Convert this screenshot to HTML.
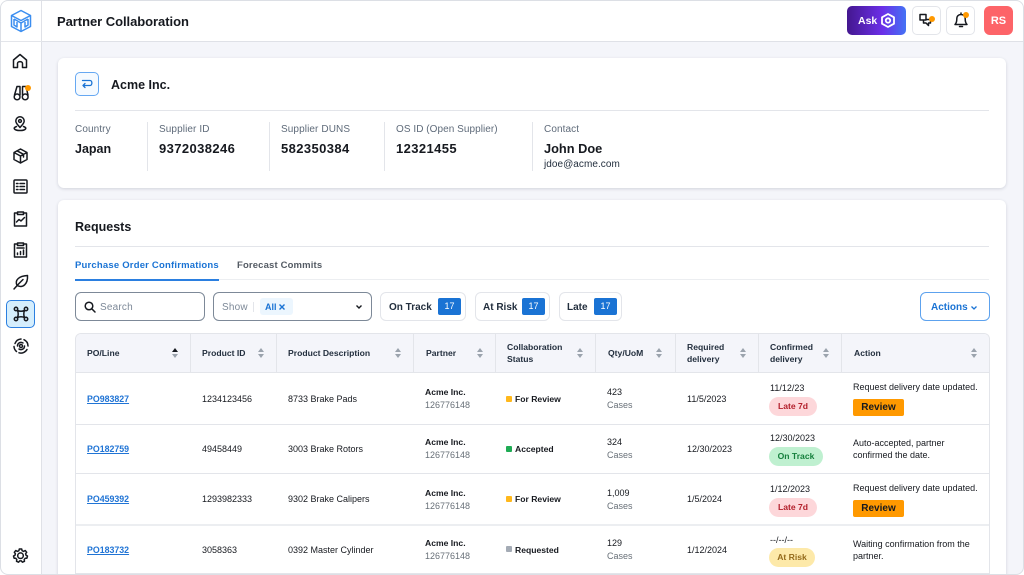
<!DOCTYPE html>
<html><head><meta charset="utf-8"><style>
*{box-sizing:border-box}
html,body{margin:0;padding:0;width:1024px;height:575px;overflow:hidden;background:#fff}
body{font-family:"Liberation Sans",sans-serif;color:#16191f;position:relative}
.a{position:absolute}
.t{position:absolute;white-space:nowrap;line-height:14px;height:14px}
.b{font-weight:700}
.s{font-size:9px}
.s.b{font-size:8.6px}
.h{font-size:8.6px;font-weight:700;color:#232f3e}
.g{color:#687078}
.l{background:#e3e5ea;position:absolute}
.c{position:absolute;background:#fff;border-radius:6px;box-shadow:0 1px 3px rgba(30,40,60,.16)}
.pill{position:absolute;height:19px;border-radius:10px;font-size:8.6px;font-weight:700;line-height:19px;text-align:center}
.rev{position:absolute;left:853px;width:51px;height:17px;background:#ff9900;border-radius:2px;font-size:10px;font-weight:700;line-height:17px;text-align:center;color:#16191f}
.po{color:#2074d5;font-weight:700;text-decoration:underline;font-size:8.8px}
.dot{position:absolute;width:6px;height:6px;border-radius:1px}
.chip{position:absolute;top:292px;height:29px;background:#fff;border:1px solid #e3e5ea;border-radius:6px}
.n{position:absolute;top:298px;width:23px;height:17px;background:#1a73d4;border-radius:2px;color:#fff;font-size:9px;line-height:17px;text-align:center}
.lab{font-size:10px;letter-spacing:.1px;color:#5f6b7a}
.val{font-size:13px;font-weight:700;letter-spacing:.4px}
.nm{font-size:10px;font-weight:700;color:#232f3e}
svg{position:absolute;overflow:visible}
.i{fill:none;stroke:#16191f;stroke-width:1.500;stroke-linecap:round;stroke-linejoin:round}
.sort{position:absolute;width:7px;height:10px;top:348px}
.sort:before{content:"";position:absolute;left:0;top:0;border-left:3.500px solid transparent;border-right:3.500px solid transparent;border-bottom:4px solid #9ba3ad}
.sort:after{content:"";position:absolute;left:0;top:6px;border-left:3.500px solid transparent;border-right:3.500px solid transparent;border-top:4px solid #9ba3ad}
.sort.on:before{border-bottom-color:#16191f}
.frame{position:absolute;left:0;top:0;width:1024px;height:575px;border:1px solid #dcdfe5;border-radius:8px;box-shadow:0 0 0 12px #fff}
</style></head><body>
<div class="a" style="left:0;top:0;width:1024px;height:575px;background:#f4f5fa"></div>
<div class="a" style="left:0;top:0;width:1024px;height:42px;background:#fff;border-bottom:1px solid #dfe1e7"></div>
<div class="a" style="left:0;top:0;width:42px;height:575px;background:#fff;border-right:1px solid #dfe1e7"></div>
<div class="l" style="left:0;top:41px;width:42px;height:1px"></div>

<svg style="left:9px;top:9px" width="24" height="24" viewBox="0 0 24 24" fill="none" stroke="#3b8ef0" stroke-width="1.500" stroke-linejoin="round"><path d="M12 1.500 21.500 6.500V17.500L12 22.500 2.500 17.500V6.500Z"/><path d="M2.500 6.500 12 11.500 21.500 6.500"/><path d="M5 10 12 14 19 10M5 10V16L8 18V13M19 10V16L16 18V13M12 14V22"/></svg>
<svg class="i" style="left:12px;top:53px" width="16" height="16" viewBox="0 0 16 16"><path d="M1.500 7 8 1.500 14.500 7V14.500H10.500V10.500C10.500 8 5.500 8 5.500 10.500V14.500H1.500Z"/></svg>
<svg class="i" style="left:13px;top:85px" width="16" height="16" viewBox="0 0 16 16"><path d="M4 1.500 1.500 10M7 2V10M9.500 2V10M13 1.500 15 10M4 1.500H7M9.500 1.500H12.500"/><rect x="1.200" y="9" width="5.800" height="5.800" rx="2.900"/><rect x="9.300" y="9" width="5.800" height="5.800" rx="2.900"/></svg>
<div class="a" style="left:25px;top:85px;width:6px;height:6px;border-radius:50%;background:#ff9900"></div>
<svg class="i" style="left:12px;top:116px" width="16" height="16" viewBox="0 0 16 16"><path d="M8 11.500C5.500 8.500 3.800 7.300 3.800 5A4.200 4.200 0 0 1 12.200 5C12.200 7.300 10.500 8.500 8 11.500Z"/><circle cx="8" cy="5" r="1.400"/><path d="M4.500 10.500C2.500 11.200 1.800 12 2.500 13 4 15 12 15 13.500 13 14.200 12 13.500 11.200 11.500 10.500"/></svg>
<svg class="i" style="left:13px;top:148px" width="15" height="16" viewBox="0 0 15 16"><path d="M7.500 1 14 4.500V11.500L7.500 15 1 11.500V4.500ZM1 4.500 7.500 8 14 4.500M7.500 8V15M4 2.800 10.500 6.300V9"/></svg>
<svg class="i" style="left:13px;top:179px" width="15" height="15" viewBox="0 0 15 15"><rect x="1" y="1" width="13" height="13" rx="1"/><path d="M3.500 4.500H5M7 4.500H11.500M3.500 7.500H5M7 7.500H11.500M3.500 10.500H5M7 10.500H11.500"/></svg>
<svg class="i" style="left:13px;top:211px" width="15" height="16" viewBox="0 0 15 16"><path d="M4.500 2H1.500V15H13.500V2H10.500"/><rect x="4.500" y="1" width="6" height="2.500"/><path d="M3.500 11 6 8.500 8 10 11.500 6.500"/></svg>
<svg class="i" style="left:13px;top:242px" width="15" height="16" viewBox="0 0 15 16"><path d="M4.500 2H1.500V15H13.500V2H10.500"/><rect x="4.500" y="1" width="6" height="2.500"/><path d="M4 6H11M4.500 12.500V11M7.500 12.500V9.500M10.500 12.500V8"/></svg>
<svg class="i" style="left:13px;top:274px" width="16" height="16" viewBox="0 0 16 16"><path d="M1 15 6 9.500M4 11.500C1.500 6 6 2 14.500 1.500 15 10 10 14.500 4 11.500ZM6 9.500 10 5.500"/></svg>
<div class="a" style="left:6px;top:300px;width:29px;height:28px;background:#d5eefd;border:1.500px solid #2b7fe0;border-radius:5px"></div>
<svg class="i" style="left:13px;top:306px" width="16" height="16" viewBox="0 0 16 16"><path d="M4.500 4.500C7 5.500 9 5.500 11.500 4.500 10.500 7 10.500 9 11.500 11.500 9 10.500 7 10.500 4.500 11.500 5.500 9 5.500 7 4.500 4.500Z"/><circle cx="3" cy="3" r="1.700"/><circle cx="13" cy="3" r="1.700"/><circle cx="3" cy="13" r="1.700"/><circle cx="13" cy="13" r="1.700"/></svg>
<svg class="i" style="left:13px;top:338px" width="16" height="16" viewBox="0 0 16 16"><path d="M2 5.500A7 7 0 0 1 8 1M11 1.700A7 7 0 0 1 15 8M14 11.500A7 7 0 0 1 6 14.800M3.500 13.500A7 7 0 0 1 1 8.500"/><path d="M4.500 8A3.500 3.500 0 0 1 10 5M11.500 8A3.500 3.500 0 0 1 6 11"/><circle cx="8" cy="8" r="1.500"/></svg>
<svg class="i" style="left:13px;top:548px" width="15" height="15" viewBox="0 0 15 15"><path d="M6.300 1H8.700L9.100 2.700 10.700 3.400 12.200 2.500 13.700 4.300 12.600 5.700 13 7.200 14.500 8 13.900 10.200 12.200 10.300 11.200 11.600 11.500 13.300 9.400 14.200 8.300 12.900H6.700L5.600 14.200 3.500 13.300 3.800 11.600 2.800 10.300 1.100 10.200 .5 8 2 7.200 2.400 5.700 1.300 4.300 2.800 2.500 4.300 3.400 5.900 2.700Z"/><circle cx="7.500" cy="7.700" r="2.800"/></svg>

<div class="t b" style="left:57px;top:14px;font-size:13px;line-height:15px;height:15px;letter-spacing:-.05px">Partner Collaboration</div>
<div class="a" style="left:847px;top:6px;width:59px;height:29px;border-radius:5px;background:linear-gradient(90deg,#44178f,#6b2fe8 60%,#4472f5)"></div>
<div class="t b" style="left:858px;top:14px;font-size:10.500px;color:#fff">Ask</div>
<svg style="left:881px;top:13px" width="14" height="15" viewBox="0 0 14 15" fill="none" stroke="#fff" stroke-width="1.800" stroke-linejoin="round"><path d="M7 1 13 4.300V10.700L7 14 1 10.700V4.300Z"/><circle cx="7" cy="7.500" r="2.200"/></svg>
<div class="a" style="left:912px;top:6px;width:29px;height:29px;border-radius:5px;background:#fff;border:1px solid #e3e5ea"></div>
<svg class="i" style="left:919px;top:13px" width="15" height="15" viewBox="0 0 15 15"><path d="M1 1.500H7V7H1ZM4.500 7V10H7L9.500 12.500V10H11.500V6.500H7"/></svg>
<div class="a" style="left:929px;top:16px;width:6px;height:6px;border-radius:50%;background:#ff9900"></div>
<div class="a" style="left:946px;top:6px;width:29px;height:29px;border-radius:5px;background:#fff;border:1px solid #e3e5ea"></div>
<svg class="i" style="left:954px;top:12px" width="14" height="16" viewBox="0 0 14 16"><path d="M1 12.500C2.500 11 2.800 9.500 2.800 7 2.800 4 4.500 2.500 7 2.500 9.500 2.500 11.200 4 11.200 7 11.200 9.500 11.500 11 13 12.500ZM7 1V2.500M5.500 14.500H8.500"/></svg>
<div class="a" style="left:963px;top:12px;width:6px;height:6px;border-radius:50%;background:#ff9900"></div>
<div class="a" style="left:984px;top:6px;width:29px;height:29px;border-radius:6px;background:#fd6468"></div>
<div class="t b" style="left:984px;top:14px;width:29px;text-align:center;font-size:11px;color:#fff">RS</div>

<div class="c" style="left:58px;top:58px;width:948px;height:130px"></div>
<div class="a" style="left:75px;top:72px;width:24px;height:24px;border:1px solid #66a8f2;border-radius:5px;background:#f5faff"></div>
<svg style="left:81px;top:79px" width="12" height="10" viewBox="0 0 12 10" fill="none" stroke="#1a73d4" stroke-width="1.300" stroke-linecap="round" stroke-linejoin="round"><path d="M1.500 1.500H9C11.500 1.500 11.500 6.500 9 6.500H2M4 4.500 2 6.500 4 8.500"/></svg>
<div class="t b" style="left:111px;top:78px;font-size:12.500px">Acme Inc.</div>
<div class="l" style="left:75px;top:110px;width:914px;height:1px"></div>
<div class="l" style="left:147px;top:122px;width:1px;height:49px"></div>
<div class="l" style="left:269px;top:122px;width:1px;height:49px"></div>
<div class="l" style="left:384px;top:122px;width:1px;height:49px"></div>
<div class="l" style="left:532px;top:122px;width:1px;height:49px"></div>
<div class="t lab" style="left:75px;top:123px">Country</div>
<div class="t val" style="left:75px;top:142px;letter-spacing:0;font-size:12.500px">Japan</div>
<div class="t lab" style="left:159px;top:123px">Supplier ID</div>
<div class="t val" style="left:159px;top:142px">9372038246</div>
<div class="t lab" style="left:281px;top:123px">Supplier DUNS</div>
<div class="t val" style="left:281px;top:142px">582350384</div>
<div class="t lab" style="left:396px;top:123px;letter-spacing:.05px">OS ID (Open Supplier)</div>
<div class="t val" style="left:396px;top:142px">12321455</div>
<div class="t lab" style="left:544px;top:123px">Contact</div>
<div class="t val" style="left:544px;top:142px;letter-spacing:0;font-size:12.800px">John Doe</div>
<div class="t" style="left:544px;top:158px;font-size:10px;letter-spacing:.05px;color:#232f3e">jdoe@acme.com</div>

<div class="c" style="left:58px;top:200px;width:948px;height:385px"></div>
<div class="t b" style="left:75px;top:220px;font-size:12.500px">Requests</div>
<div class="l" style="left:75px;top:246px;width:914px;height:1px"></div>
<div class="t b" style="left:75px;top:259px;font-size:9.500px;letter-spacing:.2px;color:#1a73d4">Purchase Order Confirmations</div>
<div class="t b" style="left:237px;top:259px;font-size:9.500px;letter-spacing:.15px;color:#545b64">Forecast Commits</div>
<div class="l" style="left:75px;top:279px;width:914px;height:1px;background:#eceef1"></div>
<div class="a" style="left:75px;top:279px;width:144px;height:2px;background:#2b7fe0"></div>

<div class="a" style="left:75px;top:292px;width:130px;height:29px;border:1px solid #7d8998;border-radius:6px;background:#fff"></div>
<svg style="left:84px;top:301px" width="12" height="12" viewBox="0 0 12 12" fill="none" stroke="#16191f" stroke-width="1.500" stroke-linecap="round"><circle cx="5" cy="5" r="3.800"/><path d="M8 8 11 11"/></svg>
<div class="t" style="left:100px;top:301px;font-size:10px;letter-spacing:.2px;color:#7d8998">Search</div>
<div class="a" style="left:213px;top:292px;width:159px;height:29px;border:1px solid #7d8998;border-radius:6px;background:#fff"></div>
<div class="t" style="left:222px;top:301px;font-size:10px;letter-spacing:.2px;color:#7d8998">Show</div>
<div class="l" style="left:253px;top:302px;width:1px;height:10px"></div>
<div class="a" style="left:260px;top:298px;width:33px;height:17px;border-radius:3px;background:#ecf6fe"></div>
<div class="t b" style="left:265px;top:300px;font-size:9px;color:#1a73d4">All</div>
<svg style="left:279px;top:304px" width="6" height="6" viewBox="0 0 6 6" stroke="#1a73d4" stroke-width="1.400"><path d="M.5 .5 5.500 5.500M5.500 .5 .5 5.500"/></svg>
<svg style="left:356px;top:305px" width="6" height="4" viewBox="0 0 6 4" fill="none" stroke="#16191f" stroke-width="1.400"><path d="M.5 .5 3 3 5.500 .5"/></svg>

<div class="chip" style="left:380px;width:86px"></div>
<div class="t nm" style="left:389px;top:301px">On Track</div>
<div class="n" style="left:438px">17</div>
<div class="chip" style="left:475px;width:75px"></div>
<div class="t nm" style="left:483px;top:301px">At Risk</div>
<div class="n" style="left:522px">17</div>
<div class="chip" style="left:559px;width:63px"></div>
<div class="t nm" style="left:567px;top:301px">Late</div>
<div class="n" style="left:594px">17</div>
<div class="a" style="left:920px;top:292px;width:70px;height:29px;border:1px solid #5da2ee;border-radius:6px;background:#fff"></div>
<div class="t b" style="left:931px;top:301px;font-size:10px;color:#1a73d4">Actions</div>
<svg style="left:971px;top:306px" width="6" height="4" viewBox="0 0 6 4" fill="none" stroke="#1a73d4" stroke-width="1.300"><path d="M.5 .5 3 3 5.500 .5"/></svg>

<div class="a" style="left:75px;top:333px;width:915px;height:242px;border:1px solid #e3e5ea;border-bottom:0;border-radius:6px 6px 0 0;background:#fff"></div>
<div class="a" style="left:76px;top:334px;width:913px;height:39px;background:#f4f5fa;border-radius:5px 5px 0 0"></div>
<div class="l" style="left:76px;top:372px;width:913px;height:1px"></div>
<div class="l" style="left:190px;top:334px;width:1px;height:39px"></div>
<div class="l" style="left:276px;top:334px;width:1px;height:39px"></div>
<div class="l" style="left:413px;top:334px;width:1px;height:39px"></div>
<div class="l" style="left:495px;top:334px;width:1px;height:39px"></div>
<div class="l" style="left:595px;top:334px;width:1px;height:39px"></div>
<div class="l" style="left:675px;top:334px;width:1px;height:39px"></div>
<div class="l" style="left:758px;top:334px;width:1px;height:39px"></div>
<div class="l" style="left:841px;top:334px;width:1px;height:39px"></div>
<div class="l" style="left:76px;top:424px;width:913px;height:1px"></div>
<div class="l" style="left:76px;top:473px;width:913px;height:1px"></div>
<div class="l" style="left:76px;top:524px;width:913px;height:2px;background:#eceef1"></div>
<div class="l" style="left:76px;top:573px;width:913px;height:2px"></div>

<div class="t h" style="left:87px;top:346px">PO/Line</div><div class="sort on" style="left:172px"></div>
<div class="t h" style="left:202px;top:346px">Product ID</div><div class="sort" style="left:258px"></div>
<div class="t h" style="left:288px;top:346px">Product Description</div><div class="sort" style="left:395px"></div>
<div class="t h" style="left:426px;top:346px">Partner</div><div class="sort" style="left:477px"></div>
<div class="t h" style="left:507px;top:340px">Collaboration</div><div class="t h" style="left:507px;top:352px">Status</div><div class="sort" style="left:577px"></div>
<div class="t h" style="left:608px;top:346px">Qty/UoM</div><div class="sort" style="left:656px"></div>
<div class="t h" style="left:687px;top:340px">Required</div><div class="t h" style="left:687px;top:352px">delivery</div><div class="sort" style="left:740px"></div>
<div class="t h" style="left:770px;top:340px">Confirmed</div><div class="t h" style="left:770px;top:352px">delivery</div><div class="sort" style="left:823px"></div>
<div class="t h" style="left:854px;top:346px">Action</div><div class="sort" style="left:971px"></div>

<!-- row 1 -->
<div class="t po" style="left:87px;top:392px">PO983827</div>
<div class="t s" style="left:202px;top:392px">1234123456</div>
<div class="t s" style="left:288px;top:392px">8733 Brake Pads</div>
<div class="t s b" style="left:425px;top:385px">Acme Inc.</div><div class="t s g" style="left:425px;top:398px">126776148</div>
<div class="dot" style="left:506px;top:396px;background:#ffb81c"></div><div class="t s b" style="left:515px;top:392px">For Review</div>
<div class="t s" style="left:607px;top:385px">423</div><div class="t s g" style="left:607px;top:398px">Cases</div>
<div class="t s" style="left:687px;top:392px">11/5/2023</div>
<div class="t s" style="left:770px;top:381px">11/12/23</div>
<div class="pill" style="left:769px;top:397px;width:48px;background:#fdd7da;color:#b3202c">Late 7d</div>
<div class="t s" style="left:853px;top:380px">Request delivery date updated.</div>
<div class="rev" style="top:399px">Review</div>
<!-- row 2 -->
<div class="t po" style="left:87px;top:442px">PO182759</div>
<div class="t s" style="left:202px;top:442px">49458449</div>
<div class="t s" style="left:288px;top:442px">3003 Brake Rotors</div>
<div class="t s b" style="left:425px;top:435px">Acme Inc.</div><div class="t s g" style="left:425px;top:448px">126776148</div>
<div class="dot" style="left:506px;top:446px;background:#1fab54"></div><div class="t s b" style="left:515px;top:442px">Accepted</div>
<div class="t s" style="left:607px;top:435px">324</div><div class="t s g" style="left:607px;top:448px">Cases</div>
<div class="t s" style="left:687px;top:442px">12/30/2023</div>
<div class="t s" style="left:770px;top:431px">12/30/2023</div>
<div class="pill" style="left:769px;top:447px;width:54px;background:#bff0d0;color:#15803d">On Track</div>
<div class="t s" style="left:853px;top:436px">Auto-accepted, partner</div>
<div class="t s" style="left:853px;top:448px">confirmed the date.</div>
<!-- row 3 -->
<div class="t po" style="left:87px;top:492px">PO459392</div>
<div class="t s" style="left:202px;top:492px">1293982333</div>
<div class="t s" style="left:288px;top:492px">9302 Brake Calipers</div>
<div class="t s b" style="left:425px;top:486px">Acme Inc.</div><div class="t s g" style="left:425px;top:499px">126776148</div>
<div class="dot" style="left:506px;top:496px;background:#ffb81c"></div><div class="t s b" style="left:515px;top:492px">For Review</div>
<div class="t s" style="left:607px;top:486px">1,009</div><div class="t s g" style="left:607px;top:499px">Cases</div>
<div class="t s" style="left:687px;top:492px">1/5/2024</div>
<div class="t s" style="left:770px;top:482px">1/12/2023</div>
<div class="pill" style="left:769px;top:498px;width:48px;background:#fdd7da;color:#b3202c">Late 7d</div>
<div class="t s" style="left:853px;top:481px">Request delivery date updated.</div>
<div class="rev" style="top:500px">Review</div>
<!-- row 4 -->
<div class="t po" style="left:87px;top:543px">PO183732</div>
<div class="t s" style="left:202px;top:543px">3058363</div>
<div class="t s" style="left:288px;top:543px">0392 Master Cylinder</div>
<div class="t s b" style="left:425px;top:536px">Acme Inc.</div><div class="t s g" style="left:425px;top:549px">126776148</div>
<div class="dot" style="left:506px;top:546px;background:#a4abb5"></div><div class="t s b" style="left:515px;top:543px">Requested</div>
<div class="t s" style="left:607px;top:536px">129</div><div class="t s g" style="left:607px;top:549px">Cases</div>
<div class="t s" style="left:687px;top:543px">1/12/2024</div>
<div class="t s" style="left:770px;top:533px">--/--/--</div>
<div class="pill" style="left:769px;top:548px;width:46px;background:#fde9a9;color:#946a1b">At Risk</div>
<div class="t s" style="left:853px;top:537px">Waiting confirmation from the</div>
<div class="t s" style="left:853px;top:549px">partner.</div>
<div class="frame"></div>
</body></html>
